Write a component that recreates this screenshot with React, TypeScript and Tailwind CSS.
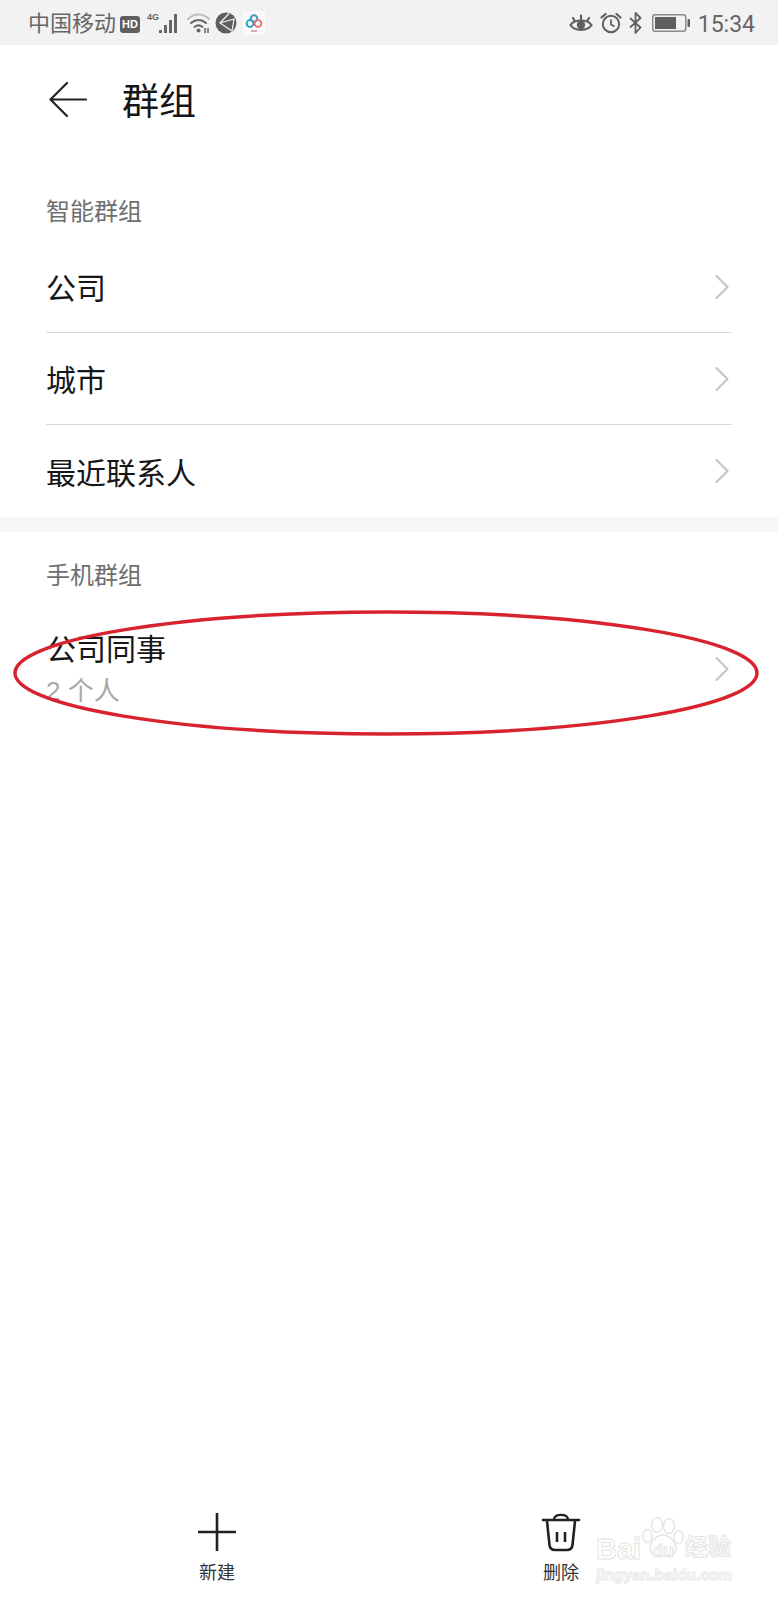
import React from "react";

const cjk = "font-['Liberation_Sans','Noto_Sans_CJK_SC',sans-serif]";

function Chevron() {
  return (
    <svg width="16" height="26" viewBox="0 0 16 26" fill="none" className="shrink-0">
      <path d="M1.5 2 L12.5 13 L1.5 24" stroke="#c6c6c6" strokeWidth="2.2" strokeLinecap="round" strokeLinejoin="round" />
    </svg>
  );
}

function Row({ title, last }: { title: string; last?: boolean }) {
  return (
    <div className={`mx-[46px] h-[92px] flex items-center justify-between pr-[1px] ${last ? "" : "border-b border-[#d9d9d9]"}`}>
      <span className="mt-[5px] text-[30px] leading-none text-[#161616]">{title}</span>
      <Chevron />
    </div>
  );
}

function SectionLabel({ children, h }: { children: React.ReactNode; h: string }) {
  return <div className={`${h} px-[46px] text-[24px] leading-none text-[#6e6e6e]`}>{children}</div>;
}

function StatusLeft() {
  return (
    <div className="flex items-center mt-[3px]">
      <span className="text-[22px] leading-none text-[#666]">中国移动</span>
      <div className="ml-[4px] w-[20px] h-[17px] rounded-[3px] bg-[#5f5f5f] text-white text-[11px] font-bold leading-[17px] text-center font-['Liberation_Sans',sans-serif]">
        HD
      </div>
      <div className="ml-[7px] w-[33px] h-[24px] relative -mt-[3px]">
        <svg width="33" height="24" viewBox="0 0 33 24">
          <text x="0" y="9" fontSize="9" fontWeight="700" fill="#666" fontFamily="Liberation Sans">4G</text>
          <g fill="#666">
            <rect x="12" y="19" width="3" height="3" />
            <rect x="17" y="14" width="3" height="8" />
            <rect x="22" y="9" width="3" height="13" />
            <rect x="27" y="3" width="3" height="19" />
          </g>
        </svg>
      </div>
      <svg className="ml-[7px] -mt-[3px]" width="24" height="22" viewBox="0 0 24 22" fill="none">
        <path d="M1 7 C7 1 16 1 22 7" stroke="#bdbdbd" strokeWidth="2" strokeLinecap="round" />
        <path d="M4 11 C8.5 7 14.5 7 19 11" stroke="#666" strokeWidth="2" strokeLinecap="round" />
        <path d="M7.5 15 C10 13 13 13 15.5 15" stroke="#666" strokeWidth="2" strokeLinecap="round" />
        <circle cx="11.5" cy="18.5" r="2" fill="#666" />
        <path d="M18 16v5M21 16v5" stroke="#666" strokeWidth="1.6" />
      </svg>
      <svg className="ml-[4px] -mt-[3px]" width="22" height="22" viewBox="0 0 22 22">
        <circle cx="11" cy="11" r="10.5" fill="#5f5f5f" />
        <path d="M14 1.5 L5 11 L17 19 M5 11 L19 7 L17 19" stroke="#f2f2f2" strokeWidth="1.2" fill="none" />
      </svg>
      <div className="ml-[6px] w-[22px] h-[24px] bg-[#fafafa] flex items-center justify-center -mt-[3px]">
        <svg width="18" height="20" viewBox="0 0 18 20" fill="none">
          <circle cx="9" cy="5.5" r="3.2" stroke="#3a9bb5" strokeWidth="2" />
          <circle cx="5" cy="10.5" r="3.4" stroke="#27a5c4" strokeWidth="2" />
          <circle cx="13" cy="10.5" r="3.4" stroke="#e8747c" strokeWidth="2" />
          <path d="M6 18h6" stroke="#c98aa0" strokeWidth="1.4" />
        </svg>
      </div>
    </div>
  );
}

function StatusRight() {
  return (
    <div className="flex items-center mt-[1px]">
      <svg width="24" height="22" viewBox="0 0 24 22" fill="none">
        <path d="M1.5 13 C5.5 7 18.5 7 22.5 13 C18.5 19.5 5.5 19.5 1.5 13 Z" stroke="#5f5f5f" strokeWidth="2.2" />
        <circle cx="12" cy="13" r="4.2" fill="#5f5f5f" />
        <path d="M4 6 L5.5 8.5 M12 3.5 V7 M20 6 L18.5 8.5" stroke="#5f5f5f" strokeWidth="2.2" strokeLinecap="round" />
      </svg>
      <svg className="ml-[7px]" width="22" height="22" viewBox="0 0 22 22" fill="none">
        <circle cx="11" cy="12" r="8.2" stroke="#5f5f5f" strokeWidth="2" />
        <path d="M11 7.5 V12.5 L14.5 14.5" stroke="#5f5f5f" strokeWidth="1.8" />
        <path d="M1.5 5.5 L5.5 2 M20.5 5.5 L16.5 2" stroke="#5f5f5f" strokeWidth="2.2" strokeLinecap="round" />
      </svg>
      <svg className="ml-[6px]" width="15" height="24" viewBox="0 0 15 24" fill="none">
        <path d="M2 7 L12.5 16.5 L7.5 22 V2 L12.5 7 L2 16.5" stroke="#5f5f5f" strokeWidth="1.8" strokeLinejoin="round" />
      </svg>
      <svg className="ml-[9px]" width="38" height="18" viewBox="0 0 38 18" fill="none">
        <rect x="0.75" y="0.75" width="33" height="16.5" rx="2.5" stroke="#8a8a8a" strokeWidth="1.5" />
        <rect x="3" y="3" width="21" height="12" fill="#5f5f5f" />
        <rect x="35.5" y="5" width="2.5" height="8" rx="1" fill="#5f5f5f" />
      </svg>
      <span className="ml-[8px] mt-[3px] text-[23px] leading-none text-[#666] font-['Roboto',sans-serif]">15:34</span>
    </div>
  );
}

function Watermark() {
  return (
    <div className="absolute left-[596px] top-[1516px] w-[140px] h-[70px] pointer-events-none select-none">
      <svg className="absolute left-[46px] top-0" width="42" height="42" viewBox="0 0 42 42" fill="none" stroke="#e6e6e6" strokeWidth="1.5">
        <ellipse cx="15" cy="9" rx="5.5" ry="7.5" />
        <ellipse cx="27" cy="10" rx="5.5" ry="7.5" />
        <ellipse cx="5.5" cy="20" rx="4.5" ry="6.5" />
        <ellipse cx="36.5" cy="21" rx="4.5" ry="6.5" />
        <path d="M8 34 C8 25 15 19 21 19 C27 19 34 25 34 34 C34 42 8 42 8 34 Z" />
      </svg>
      <span className="absolute left-0 top-[19px] text-[29px] leading-none font-bold font-['Liberation_Sans',sans-serif] text-white [-webkit-text-stroke:1px_#e4e4e4]">Bai</span>
      <span className="absolute left-[56px] top-[26px] text-[18px] leading-none font-bold font-['Liberation_Sans',sans-serif] text-white [-webkit-text-stroke:1px_#e4e4e4]">du</span>
      <span className="absolute left-[89px] top-[20px] text-[23px] leading-none font-bold text-white [-webkit-text-stroke:1px_#e4e4e4]">经验</span>
      <span className="absolute left-0 top-[51px] text-[15.5px] leading-none font-bold font-['Liberation_Sans',sans-serif] text-white [-webkit-text-stroke:1px_#e8e8e8]">jingyan.baidu.com</span>
    </div>
  );
}

export default function App() {
  return (
    <div className={`relative w-[778px] h-[1600px] bg-white flex flex-col overflow-hidden ${cjk}`}>
      <div className="h-[45px] shrink-0 bg-[#f2f2f2] flex items-center justify-between pl-[28px] pr-[23px]">
        <StatusLeft />
        <StatusRight />
      </div>

      <div className="h-[110px] shrink-0 flex items-center pl-[49px]">
        <svg width="38" height="36" viewBox="0 0 38 36" fill="none">
          <path d="M37 17.5 H2 M18 1 L1.5 17.5 L18 34" stroke="#222" strokeWidth="2.2" strokeLinecap="round" strokeLinejoin="round" />
        </svg>
        <span className="ml-[35px] mt-[4px] text-[37px] leading-none text-[#161616]">群组</span>
      </div>

      <SectionLabel h="h-[86px] pt-[45px]">智能群组</SectionLabel>
      <Row title="公司" />
      <Row title="城市" />
      <Row title="最近联系人" last />

      <div className="h-[15px] shrink-0 bg-[#f7f7f7]" />

      <SectionLabel h="h-[81px] pt-[32px]">手机群组</SectionLabel>
      <div className="mx-[46px] h-[112px] flex items-center justify-between pr-[1px]">
        <div className="flex flex-col">
          <span className="text-[30px] leading-none text-[#161616]">公司同事</span>
          <span className="mt-[13px] text-[26px] leading-none text-[#a8a8a8]">2 个人</span>
        </div>
        <Chevron />
      </div>

      <div className="flex-1" />

      <div className="h-[88px] shrink-0 flex text-[18px] leading-none text-[#333]">
        <div className="ml-[197px] w-[40px] flex flex-col items-center">
          <svg width="40" height="40" viewBox="0 0 40 40" fill="none">
            <path d="M20 1 V39 M1 20 H39" stroke="#222" strokeWidth="2.6" />
          </svg>
          <span className="mt-[12px]">新建</span>
        </div>
        <div className="ml-[304px] w-[40px] flex flex-col items-center">
          <svg width="40" height="40" viewBox="0 0 40 40" fill="none">
            <path d="M2 8 H38" stroke="#222" strokeWidth="2.6" strokeLinecap="round" />
            <path d="M13 7 C14 1.5 26 1.5 27 7" stroke="#222" strokeWidth="2.4" />
            <path d="M6 9 L8.5 33 C9 37 11 38 14 38 H26 C29 38 31 37 31.5 33 L34 9" stroke="#222" strokeWidth="2.6" />
            <path d="M16 20 V30 M24 20 V30" stroke="#222" strokeWidth="2.6" />
          </svg>
          <span className="mt-[12px]">删除</span>
        </div>
      </div>

      <svg className="absolute left-[12px] top-[609px]" width="750" height="128" viewBox="0 0 750 128" fill="none">
        <ellipse cx="374" cy="64" rx="371" ry="61" stroke="#d8232f" strokeWidth="3.5" />
      </svg>

      <Watermark />
    </div>
  );
}
